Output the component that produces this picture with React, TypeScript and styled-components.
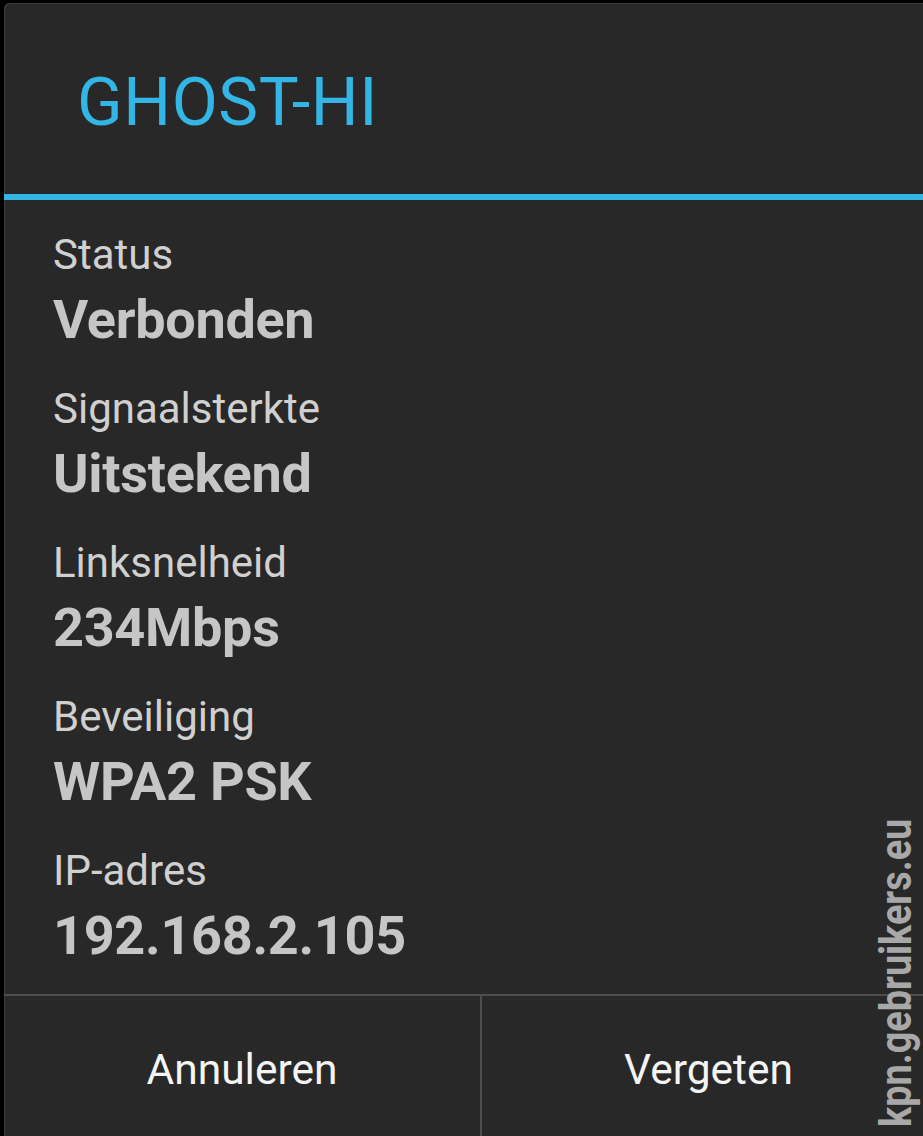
import styled, { createGlobalStyle } from "styled-components";

const GlobalStyle = createGlobalStyle`
  html, body {
    margin: 0;
    padding: 0;
    background: #000;
    overflow: hidden;
  }
  body {
    font-family: Roboto, "Noto Sans", "Liberation Sans", sans-serif;
  }
`;

const Screen = styled.div`
  position: relative;
  width: 923px;
  height: 1136px;
  overflow: hidden;
  background: #000;
`;

const Dialog = styled.div`
  margin: 3px 0 0 4px;
  width: 931px;
  height: 1133px;
  background: #282828;
  border-top-left-radius: 6px;
  box-shadow: inset 1px 1px 0 #3d3d3d;
  display: flex;
  flex-direction: column;
`;

const Header = styled.div`
  height: 191px;
  box-sizing: border-box;
  padding: 66px 0 0 73px;
`;

const Title = styled.h1`
  margin: 0;
  font-size: 67px;
  font-weight: 400;
  line-height: 1;
  letter-spacing: 0.6px;
  color: #33b5e5;
`;

const Accent = styled.div`
  height: 6px;
  background: #33b5e5;
`;

const Details = styled.div`
  padding: 27px 0 0 49px;
  display: flex;
  flex-direction: column;
  gap: 24px;
  flex: 0 0 auto;
  height: 794px;
  box-sizing: border-box;
`;

const Field = styled.div`
  display: flex;
  flex-direction: column;
`;

const Label = styled.div`
  font-size: 42px;
  line-height: 56px;
  color: #d0d0d0;
`;

const Value = styled.div`
  font-size: 54px;
  line-height: 74px;
  font-weight: 700;
  letter-spacing: -0.3px;
  color: #c6c6c6;
`;

const ButtonBar = styled.div`
  border-top: 2px solid #4e4e4e;
  display: grid;
  grid-template-columns: 476px 2px 453px;
  height: 140px;
`;

const Divider = styled.div`
  background: #4e4e4e;
`;

const DialogButton = styled.button`
  border: 0;
  background: transparent;
  color: #f4f4f4;
  font-family: Roboto, "Noto Sans", sans-serif;
  font-size: 42.5px;
  line-height: 1;
  padding: 8px 0 0;
  display: flex;
  align-items: center;
  justify-content: center;
  cursor: pointer;
`;

const Watermark = styled.span`
  position: absolute;
  left: 874px;
  top: 1127px;
  transform-origin: left top;
  transform: rotate(-90deg) scaleX(0.86);
  font-family: Roboto, "Liberation Sans", sans-serif;
  font-size: 44px;
  font-weight: 700;
  line-height: 1;
  color: #a8a8a8;
  white-space: nowrap;
`;

const fields = [
  { label: "Status", value: "Verbonden" },
  { label: "Signaalsterkte", value: "Uitstekend" },
  { label: "Linksnelheid", value: "234Mbps" },
  { label: "Beveiliging", value: "WPA2 PSK" },
  { label: "IP-adres", value: "192.168.2.105" },
];

export default function App() {
  return (
    <>
      <GlobalStyle />
      <Screen>
        <Dialog>
          <Header>
            <Title>GHOST-HI</Title>
          </Header>
          <Accent />
          <Details>
            {fields.map((f) => (
              <Field key={f.label}>
                <Label>{f.label}</Label>
                <Value>{f.value}</Value>
              </Field>
            ))}
          </Details>
          <ButtonBar>
            <DialogButton>Annuleren</DialogButton>
            <Divider />
            <DialogButton>Vergeten</DialogButton>
          </ButtonBar>
        </Dialog>
        <Watermark>kpn.gebruikers.eu</Watermark>
      </Screen>
    </>
  );
}
